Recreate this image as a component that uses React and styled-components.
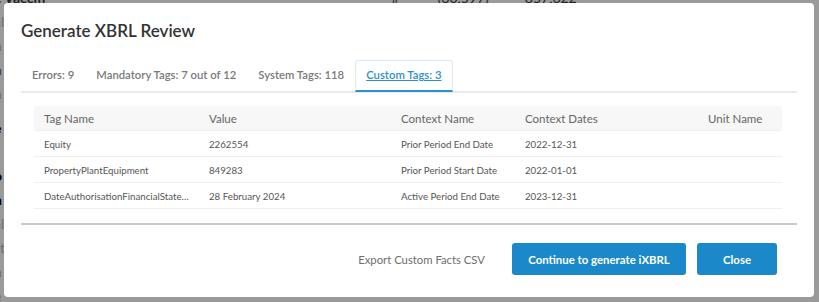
import React from 'react';
import styled, { createGlobalStyle } from 'styled-components';

const GlobalStyle = createGlobalStyle`
  html, body {
    margin: 0;
    padding: 0;
    background: #9a9a9a;
    font-family: Lato, "Open Sans", sans-serif;
  }
`;

const Page = styled.div`
  position: relative;
  width: 819px;
  height: 302px;
  overflow: hidden;
  background: #9a9a9a;
`;

const Behind = styled.div`
  display: flex;
  flex-direction: column;
  gap: 10px;
  margin-left: -6px;
  margin-top: -9px;
  color: #3a3a3a;
  font-size: 14px;
  line-height: 14px;
  .strong { color: #000; font-weight: 700; }
  .faint { color: #6f6f6f; }
`;

const BehindTop = styled.div`
  display: flex;
  font-size: 14px;
  color: #222;
  font-weight: 700;
  span:nth-child(2) { margin-left: 346px; font-weight: 400; }
  span:nth-child(3) { margin-left: 38px; font-weight: 400; }
  span:nth-child(4) { margin-left: 36px; font-weight: 400; }
`;

const Modal = styled.div`
  position: absolute;
  left: 4px;
  top: 3px;
  width: 810px;
  height: 294px;
  box-sizing: border-box;
  background: #fff;
  border-radius: 4px;
  padding: 0 17px;
  display: flex;
  flex-direction: column;
`;

const Title = styled.h2`
  margin: 17px 0 0 0;
  font-size: 17px;
  line-height: 22px;
  font-weight: 600;
  color: #333;
`;

const TabBar = styled.div`
  display: flex;
  margin-top: 19px;
  border-bottom: 2px solid #e8e8ee;
  height: 30px;
`;

const Tab = styled.div`
  padding: 0 10px 2px;
  box-sizing: border-box;
  height: 32px;
  margin-top: -1px;
  display: flex;
  align-items: center;
  font-size: 11.3px;
  font-weight: 600;
  color: ${p => (p.$active ? '#2d8fd1' : '#7a7a7a')};
  text-decoration: ${p => (p.$active ? 'underline' : 'none')};
  border: 1px solid ${p => (p.$active ? '#dbe9f5' : 'transparent')};
  border-bottom: 2px solid ${p => (p.$active ? '#2d8fd1' : 'transparent')};
  border-radius: 3px 3px 0 0;
`;

const Table = styled.div`
  margin: 13px 15px 0 13px;
  display: flex;
  flex-direction: column;
`;

const Row = styled.div`
  display: grid;
  grid-template-columns: 165px 192px 124px 183px 1fr;
  height: ${p => (p.$header ? '25px' : '26px')};
  align-items: center;
  background: ${p => (p.$header ? '#f7f7f7' : '#fff')};
  border-bottom: 1px solid #efefef;
  box-sizing: border-box;
  font-size: ${p => (p.$header ? '11.5px' : '9.7px')};
  color: ${p => (p.$header ? '#666' : '#555')};
`;

const Cell = styled.div`
  padding: 0 6px 0 10px;
  white-space: nowrap;
  overflow: hidden;
  text-overflow: ellipsis;
`;

const Divider = styled.div`
  margin-top: 14px;
  height: 2px;
  background: #c8c8c8;
`;

const Footer = styled.div`
  display: flex;
  justify-content: flex-end;
  align-items: center;
  gap: 11px;
  padding-right: 20px;
  margin-top: 18px;
`;

const LinkButton = styled.div`
  font-size: 11.3px;
  color: #6e6e6e;
  margin-right: 16px;
`;

const Button = styled.button`
  height: 32px;
  width: ${p => p.$w}px;
  border: none;
  border-radius: 3px;
  background: #1a88c9;
  color: #fff;
  font-family: Lato, "Open Sans", sans-serif;
  font-size: 11.4px;
  font-weight: 700;
`;

const tabs = [
  { label: 'Errors: 9' },
  { label: 'Mandatory Tags: 7 out of 12' },
  { label: 'System Tags: 118' },
  { label: 'Custom Tags: 3', active: true },
];

const rows = [
  ['Equity', '2262554', 'Prior Period End Date', '2022-12-31', ''],
  ['PropertyPlantEquipment', '849283', 'Prior Period Start Date', '2022-01-01', ''],
  ['DateAuthorisationFinancialStatementsIssued', '28 February 2024', 'Active Period End Date', '2023-12-31', ''],
];

export default function App() {
  return (
    <Page>
      <GlobalStyle />
      <Behind>
        <BehindTop>
          <span>e Vaccifi</span>
          <span>#</span>
          <span>(60,597)</span>
          <span>857,622</span>
        </BehindTop>
        <span className="faint">al</span>
        <span className="faint">h</span>
        <span>n</span>
        <span className="faint">n</span>
        <span />
        <span className="strong">e</span>
        <span className="faint">r</span>
        <span className="strong">o</span>
        <span className="strong">n</span>
        <span className="faint">al</span>
        <span className="faint">st</span>
        <span className="faint">n</span>
        <span className="faint">e</span>
      </Behind>
      <Modal>
        <Title>Generate XBRL Review</Title>
        <TabBar>
          {tabs.map(t => (
            <Tab key={t.label} $active={t.active}>{t.label}</Tab>
          ))}
        </TabBar>
        <Table>
          <Row $header>
            <Cell>Tag Name</Cell>
            <Cell>Value</Cell>
            <Cell>Context Name</Cell>
            <Cell>Context Dates</Cell>
            <Cell>Unit Name</Cell>
          </Row>
          {rows.map(r => (
            <Row key={r[0]}>
              {r.map((c, i) => (
                <Cell key={i}>{c}</Cell>
              ))}
            </Row>
          ))}
        </Table>
        <Divider />
        <Footer>
          <LinkButton>Export Custom Facts CSV</LinkButton>
          <Button $w={174}>Continue to generate iXBRL</Button>
          <Button $w={80}>Close</Button>
        </Footer>
      </Modal>
    </Page>
  );
}
